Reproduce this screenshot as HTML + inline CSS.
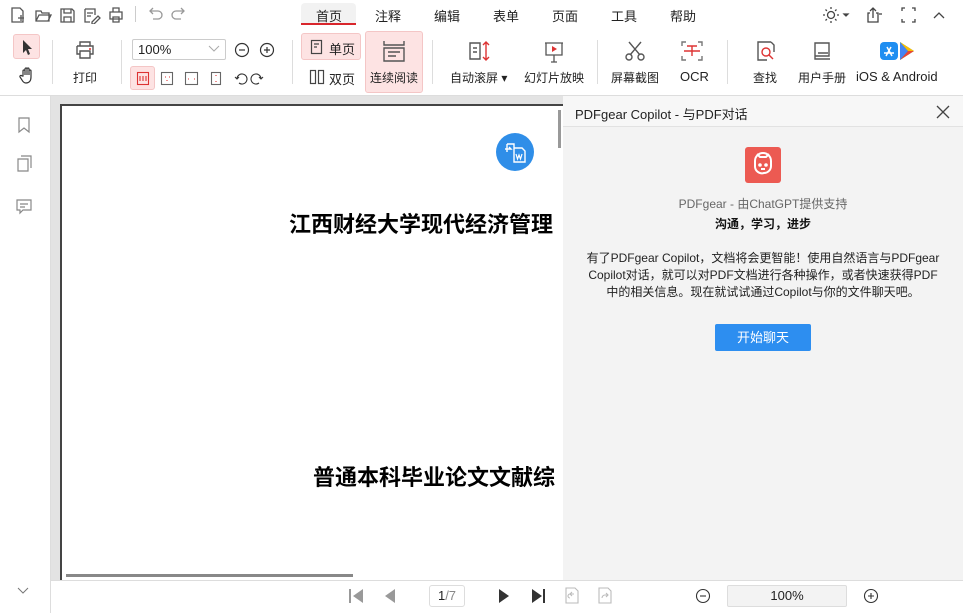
<!DOCTYPE html>
<html><head><meta charset="utf-8"><style>
*{margin:0;padding:0;box-sizing:border-box}
body{width:963px;height:613px;overflow:hidden;background:#fff;font-family:"Liberation Sans","Noto Sans CJK SC",sans-serif;font-size:12px;color:#222;position:relative}
.a{position:absolute}
.tab{position:absolute;top:6px;font-size:13px;color:#222}
.lbl{position:absolute;font-size:12px;color:#222;white-space:nowrap}
.sep{position:absolute;width:1px;background:#ddd;top:40px;height:44px}
svg{position:absolute}
</style></head><body>
<svg style="left:10px;top:6px" width="120" height="18" fill="none" stroke="#555" stroke-width="1.3">
<path d="M2 2h8l3 3v11H2z M8 12h6 M11 9v6"/>
<path d="M26 5h5l1 2h7v8H26z M26 15l3-6h12l-3 6"/>
<path d="M51 3h11l2 2v11H51z M54 3v4h7V3 M54 16v-5h7v5"/>
<path d="M75 3h10v6 M75 3v13h5 M77 7h6 M77 10h4 M82 16l6-6 2 2-6 6h-2z"/>
<path d="M100 6h12v7h-12z M103 6V2h6v4 M103 11h6v5h-6z"/>
</svg>
<div class="a" style="left:135px;top:6px;width:1px;height:16px;background:#ccc"></div>
<svg style="left:146px;top:5px" width="44" height="18" fill="none" stroke="#999" stroke-width="1.3"><path d="M4 6h8a4 4 0 0 1 0 8H7 M7 3L4 6l3 3"/><path d="M38 6h-8a4 4 0 0 0 0 8h5 M35 3l3 3-3 3"/></svg>
<div class="a" style="left:301px;top:3px;width:55px;height:22px;background:#f2f2f2;border-radius:4px 4px 0 0"></div>
<div class="a" style="left:301px;top:23px;width:55px;height:2px;background:#d9262c"></div>
<div class="tab" style="left:316px">首页</div>
<div class="tab" style="left:375px">注释</div>
<div class="tab" style="left:434px">编辑</div>
<div class="tab" style="left:493px">表单</div>
<div class="tab" style="left:552px">页面</div>
<div class="tab" style="left:611px">工具</div>
<div class="tab" style="left:670px">帮助</div>
<svg style="left:822px;top:6px" width="130" height="18" fill="none" stroke="#444" stroke-width="1.3">
<circle cx="9" cy="9" r="3.5"/><path d="M9 1v2M9 15v2M1 9h2M15 9h2M3.5 3.5l1.4 1.4M13.1 13.1l1.4 1.4M3.5 14.5l1.4-1.4M13.1 4.9l1.4-1.4"/>
<path d="M22 8l2 2 2-2z" fill="#444"/>
<path d="M48 7h-2v9h10V7h-2 M51 12V2 M48 5l3-3 3 3"/><path d="M57 8h3" />
<path d="M80 5V2h3 M90 2h3v3 M93 13v3h-3 M83 16h-3v-3"/>
<path d="M112 12l5-5 5 5"/>
</svg>
<div class="a" style="left:13px;top:34px;width:27px;height:25px;background:#fde3e3;border:1px solid #f4c6c6;border-radius:3px"></div>
<svg style="left:19px;top:38px" width="16" height="18"><path d="M4 2v13l3-3 2 5 2-1-2-5h4z" fill="#333"/></svg>
<svg style="left:18px;top:66px" width="18" height="18" fill="none" stroke="#333" stroke-width="1.2"><path d="M5 10V5a1 1 0 0 1 2 0v4V3a1 1 0 0 1 2 0v6V3a1 1 0 0 1 2 0v6V5a1 1 0 0 1 2 0v6c0 4-2 6-5 6-2 0-3-1-4-3l-2-3a1 1 0 0 1 2-1z"/></svg>
<div class="sep" style="left:52px"></div>
<svg style="left:74px;top:40px" width="22" height="20" fill="none" stroke="#555" stroke-width="1.4"><path d="M6 6V2h10v4 M3 6h16v8h-3 M6 14H3V6 M6 11h10v7H6z"/><circle cx="16" cy="9" r="1" fill="#d33" stroke="none"/></svg>
<div class="lbl" style="left:73px;top:69px">打印</div>
<div class="sep" style="left:121px"></div>
<div class="a" style="left:132px;top:39px;width:94px;height:21px;border:1px solid #ccc;border-radius:2px;background:#fff"></div>
<div class="lbl" style="left:138px;top:42px;font-size:13px">100%</div>
<svg style="left:208px;top:45px" width="12" height="8" fill="none" stroke="#aaa"><path d="M1 1l5 5 5-5"/></svg>
<svg style="left:233px;top:41px" width="44" height="18" fill="none" stroke="#333" stroke-width="1.2"><circle cx="9" cy="9" r="6.5"/><path d="M6 9h6"/><circle cx="34" cy="9" r="6.5"/><path d="M31 9h6M34 6v6"/></svg>
<div class="a" style="left:130px;top:66px;width:25px;height:24px;background:#fde3e3;border:1px solid #f4c6c6;border-radius:3px"></div>
<svg style="left:136px;top:71px" width="140" height="16" fill="none" stroke="#666" stroke-width="1.1">
<rect x="1.5" y="1.5" width="11" height="12" stroke="#d33"/><path d="M4 5v5M7 5v5M10 5v5" stroke="#d33"/>
<rect x="25.5" y="1.5" width="11" height="12"/><path d="M29 6h1M33 6h1M31 9v1" stroke="#d33"/>
<rect x="49.5" y="1.5" width="12" height="12"/><path d="M52 8h1M58 8h1" stroke="#d33"/>
<rect x="75.5" y="1.5" width="9" height="12"/><path d="M80 4v1M80 10v1" stroke="#d33"/>
<path d="M103 12a5 5 0 1 0-2-4 M99 6l2 2 2-2" stroke="#333"/>
<path d="M123 12a5 5 0 1 1 2-4 M127 6l-2 2-2-2" stroke="#333"/>
</svg>
<div class="sep" style="left:292px"></div>
<div class="a" style="left:301px;top:33px;width:60px;height:27px;background:#fde3e3;border:1px solid #f4c6c6;border-radius:3px"></div>
<svg style="left:310px;top:39px" width="14" height="16" fill="none" stroke="#444" stroke-width="1.2"><rect x="1.5" y="1.5" width="10" height="13"/><path d="M4 5h5M4 8h3"/></svg>
<div class="lbl" style="left:329px;top:39px;font-size:13px">单页</div>
<svg style="left:309px;top:69px" width="16" height="16" fill="none" stroke="#444" stroke-width="1.2"><rect x="1.5" y="1.5" width="5" height="13"/><rect x="9.5" y="1.5" width="5" height="13"/></svg>
<div class="lbl" style="left:329px;top:69px;font-size:13px">双页</div>
<div class="a" style="left:365px;top:31px;width:58px;height:62px;background:#fde3e3;border:1px solid #f4c6c6;border-radius:3px"></div>
<svg style="left:381px;top:40px" width="26" height="22" fill="none" stroke="#555" stroke-width="1.4"><path d="M3 1v4h20V1 M3 21v-13h20v13z M7 12h12M7 16h8"/></svg>
<div class="lbl" style="left:370px;top:69px">连续阅读</div>
<div class="sep" style="left:432px"></div>
<svg style="left:468px;top:40px" width="26" height="22" fill="none" stroke-width="1.4"><path d="M2 3h10v16H2z M5 8h4M5 12h4" stroke="#555"/><path d="M18 2v18 M15 5l3-3 3 3 M15 17l3 3 3-3" stroke="#d33"/></svg>
<div class="lbl" style="left:450px;top:69px">自动滚屏 ▾</div>
<svg style="left:542px;top:40px" width="24" height="24" fill="none" stroke="#555" stroke-width="1.3"><path d="M3 3h18 M4 3v12h16V3 M12 15v7 M9 22h6"/><path d="M10 6l5 3-5 3z" fill="#d33" stroke="none"/></svg>
<div class="lbl" style="left:524px;top:69px">幻灯片放映</div>
<div class="sep" style="left:597px"></div>
<svg style="left:624px;top:40px" width="22" height="22" fill="none" stroke="#555" stroke-width="1.4"><path d="M5 2l11 13 M17 2L6 15"/><circle cx="5" cy="17" r="3"/><circle cx="17" cy="17" r="3"/></svg>
<div class="lbl" style="left:611px;top:69px">屏幕截图</div>
<svg style="left:680px;top:40px" width="24" height="22" fill="none" stroke-width="1.4"><path d="M2 6V2h4 M18 2h4v4 M22 16v4h-4 M6 20H2v-4" stroke="#777"/><path d="M7 6h10 M12 6v10 M4 11h16" stroke="#d33"/></svg>
<div class="lbl" style="left:680px;top:69px;font-size:13px">OCR</div>
<div class="sep" style="left:727px"></div>
<svg style="left:755px;top:40px" width="22" height="22" fill="none" stroke-width="1.4"><path d="M16 2H3v18h9 M16 2l3 3v7" stroke="#555"/><circle cx="11" cy="12" r="4" stroke="#d33"/><path d="M14 15l4 4" stroke="#d33"/></svg>
<div class="lbl" style="left:753px;top:69px">查找</div>
<svg style="left:812px;top:40px" width="22" height="22" fill="none" stroke="#555" stroke-width="1.4"><path d="M3 3h14v13H3z M3 16v3h15 M6 13h10"/></svg>
<div class="lbl" style="left:798px;top:69px">用户手册</div>
<svg style="left:880px;top:40px" width="38" height="22"><rect x="0" y="2" width="18" height="18" rx="4" fill="#1f8ef1"/><path d="M6 16l5-9 M12 16l-5-9 M4 13h10" stroke="#fff" stroke-width="1.5"/><path d="M20 2l14 9-14 9z" fill="#34a853"/><path d="M20 2l8 9-8 9z" fill="#4285f4"/><path d="M28 11l6 0-14 9z" fill="#ea4335"/><path d="M28 11l6 0-14-9z" fill="#fbbc04"/></svg>
<div class="lbl" style="left:856px;top:69px;font-size:13px">iOS &amp; Android</div>
<div class="a" style="left:0;top:95px;width:963px;height:1px;background:#ddd"></div>
<div class="a" style="left:50px;top:96px;width:1px;height:517px;background:#ddd"></div>
<svg style="left:14px;top:115px" width="22" height="110" fill="none" stroke="#888" stroke-width="1.2">
<path d="M5 3h10v14l-5-4-5 4z"/>
<path d="M4 44h10v12H4z M7 41h10v12"/>
<path d="M3 85h14v10H9l-3 3v-3H3z M6 89h8M6 92h5"/>
</svg>
<svg style="left:17px;top:587px" width="12" height="8" fill="none" stroke="#777"><path d="M1 1l5 5 5-5"/></svg>
<div class="a" style="left:51px;top:96px;width:512px;height:484px;background:#e3e3e3"></div>
<div class="a" style="left:60px;top:104px;width:503px;height:476px;background:#fff;border-left:2px solid #444;border-top:2px solid #444"></div>
<div class="a" style="left:558px;top:110px;width:3px;height:38px;background:#999"></div>
<div class="a" style="left:66px;top:574px;width:287px;height:3px;background:#888"></div>
<div class="a" style="left:496px;top:133px;width:38px;height:38px;border-radius:50%;background:#2f8ee8"></div>
<svg style="left:504px;top:141px" width="24" height="24" fill="none" stroke="#fff" stroke-width="1.4"><path d="M3 3h7v4 M3 3v8 M1 8h6l-2-2 M10 7h8l3 3v11H10z"/><path d="M12 13l1.5 5 1.5-4 1.5 4 1.5-5" stroke-width="1.2"/></svg>
<div class="a" style="left:289px;top:207px;font-size:22px;font-weight:bold;color:#000;white-space:nowrap;width:274px;overflow:hidden;font-family:'Liberation Sans','Noto Sans CJK SC',sans-serif">江西财经大学现代经济管理</div>
<div class="a" style="left:313px;top:460px;font-size:22px;font-weight:bold;color:#000;white-space:nowrap;width:250px;overflow:hidden;font-family:'Liberation Sans','Noto Sans CJK SC',sans-serif">普通本科毕业论文文献综</div>
<div class="a" style="left:563px;top:96px;width:400px;height:484px;background:#f3f3f3"></div>
<div class="a" style="left:563px;top:96px;width:400px;height:31px;background:#f7f7f7;border-bottom:1px solid #e2e2e2"></div>
<div class="lbl" style="left:575px;top:104px;font-size:13px">PDFgear Copilot - 与PDF对话</div>
<svg style="left:936px;top:105px" width="14" height="14" stroke="#444" stroke-width="1.3"><path d="M1 1l12 12M13 1L1 13"/></svg>
<div class="a" style="left:745px;top:147px;width:36px;height:36px;background:#ec5a52;border-radius:3px"></div>
<svg style="left:750px;top:151px" width="26" height="28" fill="none" stroke="#fff" stroke-width="2"><path d="M7 3l3 3h6l3-3 M5 10a8 8 0 0 1 16 0v5a7 7 0 0 1-7 7h-0a7 7 0 0 1-9-7z"/><circle cx="10" cy="14" r=".8" fill="#fff"/><circle cx="16" cy="14" r=".8" fill="#fff"/><path d="M11 18h4"/></svg>
<div class="a" style="left:563px;top:195px;width:400px;text-align:center;font-size:12px;color:#666">PDFgear - 由ChatGPT提供支持</div>
<div class="a" style="left:563px;top:215px;width:400px;text-align:center;font-size:12px;font-weight:bold;color:#111">沟通，学习，进步</div>
<div class="a" style="left:582px;top:250px;width:362px;text-align:center;font-size:12px;line-height:17px;color:#222">有了PDFgear Copilot，文档将会更智能！使用自然语言与PDFgear Copilot对话，就可以对PDF文档进行各种操作，或者快速获得PDF<br>中的相关信息。现在就试试通过Copilot与你的文件聊天吧。</div>
<div class="a" style="left:715px;top:324px;width:96px;height:27px;background:#2d8ef0;border-radius:2px;color:#fff;text-align:center;line-height:27px;font-size:13px">开始聊天</div>
<div class="a" style="left:51px;top:580px;width:912px;height:1px;background:#ddd"></div>
<svg style="left:347px;top:587px" width="220" height="18">
<path d="M3 2v14" stroke="#999" stroke-width="2"/><path d="M16 2L6 9l10 7z" fill="#999"/>
<path d="M48 2l-10 7 10 7z" fill="#999"/>
<path d="M152 2l10 7-10 7z" fill="#333"/>
<path d="M185 2l10 7-10 7z" fill="#333"/><path d="M197 2v14" stroke="#333" stroke-width="2"/>
</svg>
<div class="a" style="left:429px;top:585px;width:36px;height:22px;border:1px solid #ddd;border-radius:3px;text-align:center;line-height:20px;font-size:13px">1<span style="color:#888">/7</span></div>
<svg style="left:564px;top:586px" width="52" height="20" fill="none" stroke="#bbb" stroke-width="1.1"><path d="M2 2h9l3 3v12H2z M10 8H6a2 2 0 0 0 0 4 M8 6L6 8l2 2"/><path d="M35 2h9l3 3v12H35z M38 12a3 3 0 0 1 3-3h3 M42 7l2 2-2 2"/></svg>
<svg style="left:695px;top:588px" width="186" height="16" fill="none" stroke="#333" stroke-width="1.1"><circle cx="8" cy="8" r="6.5"/><path d="M5 8h6"/><circle cx="176" cy="8" r="6.5"/><path d="M173 8h6M176 5v6"/></svg>
<div class="a" style="left:727px;top:585px;width:120px;height:22px;background:#f3f3f3;border:1px solid #ddd;border-radius:2px;text-align:center;line-height:20px;font-size:13px">100%</div>
</body></html>
